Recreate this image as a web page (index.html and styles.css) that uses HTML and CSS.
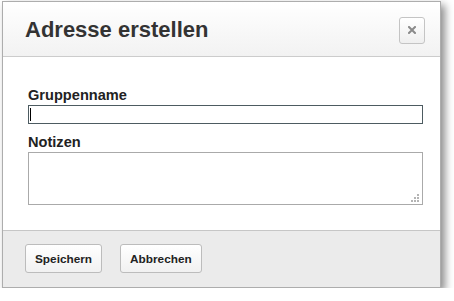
FILE: index.html
```html
<!DOCTYPE html>
<html lang="de">
<head>
<meta charset="utf-8">
<title>Adresse erstellen</title>
<link rel="stylesheet" href="styles.css">
</head>
<body>
<div class="dialog">
  <div class="dialog-header">
    <h1 class="dialog-title">Adresse erstellen</h1>
    <button class="close-btn" type="button" aria-label="Schließen">
      <svg width="8" height="8" viewBox="0 0 8 8"><path d="M1 1 L7 7 M7 1 L1 7" stroke="#8a8a8a" stroke-width="2" stroke-linecap="square"/></svg>
    </button>
  </div>
  <div class="dialog-body">
    <label class="field-label" for="gname">Gruppenname</label>
    <div class="input-wrap">
      <input class="text-input" id="gname" type="text">
      <span class="caret"></span>
    </div>
    <label class="field-label notes-label" for="notes">Notizen</label>
    <div class="textarea-wrap">
      <textarea class="text-area" id="notes"></textarea>
      <svg class="grip" width="9" height="9" viewBox="0 0 9 9">
        <rect x="6" y="0" width="2" height="2" fill="#b4b4b4"/>
        <rect x="3" y="3" width="2" height="2" fill="#b4b4b4"/>
        <rect x="6" y="3" width="2" height="2" fill="#b4b4b4"/>
        <rect x="0" y="6" width="2" height="2" fill="#b4b4b4"/>
        <rect x="3" y="6" width="2" height="2" fill="#b4b4b4"/>
        <rect x="6" y="6" width="2" height="2" fill="#b4b4b4"/>
      </svg>
    </div>
  </div>
  <div class="dialog-footer">
    <button class="btn" type="button">Speichern</button>
    <button class="btn" type="button">Abbrechen</button>
  </div>
</div>
</body>
</html>
```

FILE: styles.css
```css
html, body {
  margin: 0;
  padding: 0;
  background: #ffffff;
}
body {
  padding: 1px 0 0 2px;
  font-family: "Liberation Sans", Arial, sans-serif;
}
.dialog {
  width: 437px;
  border: 1px solid #adadad;
  background: #ffffff;
  box-shadow: 4px 4px 8px rgba(0, 0, 0, 0.45);
}
.dialog-header {
  height: 54px;
  display: flex;
  align-items: center;
  justify-content: space-between;
  padding: 0 15px 0 22px;
  background: linear-gradient(#ffffff, #f2f2f2);
  border-bottom: 1px solid #cccccc;
}
.dialog-title {
  margin: 0;
  font-size: 22px;
  font-weight: bold;
  color: #333333;
  line-height: 26px;
  padding-top: 1px;
}
.close-btn {
  width: 26px;
  height: 27px;
  padding: 0;
  display: flex;
  align-items: center;
  justify-content: center;
  border: 1px solid #c4c4c4;
  border-radius: 3px;
  background: linear-gradient(#ffffff, #efefef);
  margin-top: 2px;
}
.dialog-body {
  padding: 30px 17px 25px 25px;
  display: flex;
  flex-direction: column;
}
.field-label {
  display: block;
  font-size: 14.6px;
  line-height: 17px;
  font-weight: bold;
  color: #222222;
  margin-bottom: 1px;
}
.notes-label {
  margin-top: 10px;
}
.input-wrap,
.textarea-wrap {
  position: relative;
}
.text-input {
  display: block;
  box-sizing: border-box;
  width: 395px;
  height: 19px;
  margin: 0;
  padding: 0 2px;
  border: 1px solid #4d5b61;
  background: #ffffff;
  outline: none;
}
.caret {
  position: absolute;
  left: 2px;
  top: 3px;
  width: 1px;
  height: 13px;
  background: #000000;
}
.text-area {
  display: block;
  box-sizing: border-box;
  width: 395px;
  height: 53px;
  margin: 0;
  padding: 2px;
  border: 1px solid #aaaaaa;
  resize: none;
  background: #ffffff;
  outline: none;
}
.grip {
  position: absolute;
  right: 3px;
  bottom: 2px;
}
.dialog-footer {
  border-top: 1px solid #c6c6c6;
  background: #ebebeb;
  display: flex;
  align-items: flex-start;
  gap: 18px;
  padding: 13px 0 0 22px;
  box-sizing: border-box;
  height: 57px;
}
.btn {
  height: 29px;
  padding: 0 9px;
  border: 1px solid #bcbcbc;
  border-radius: 3px;
  background: linear-gradient(#ffffff, #f1f1f1);
  font-family: "Liberation Sans", Arial, sans-serif;
  font-size: 11.8px;
  font-weight: bold;
  color: #222222;
}
```
